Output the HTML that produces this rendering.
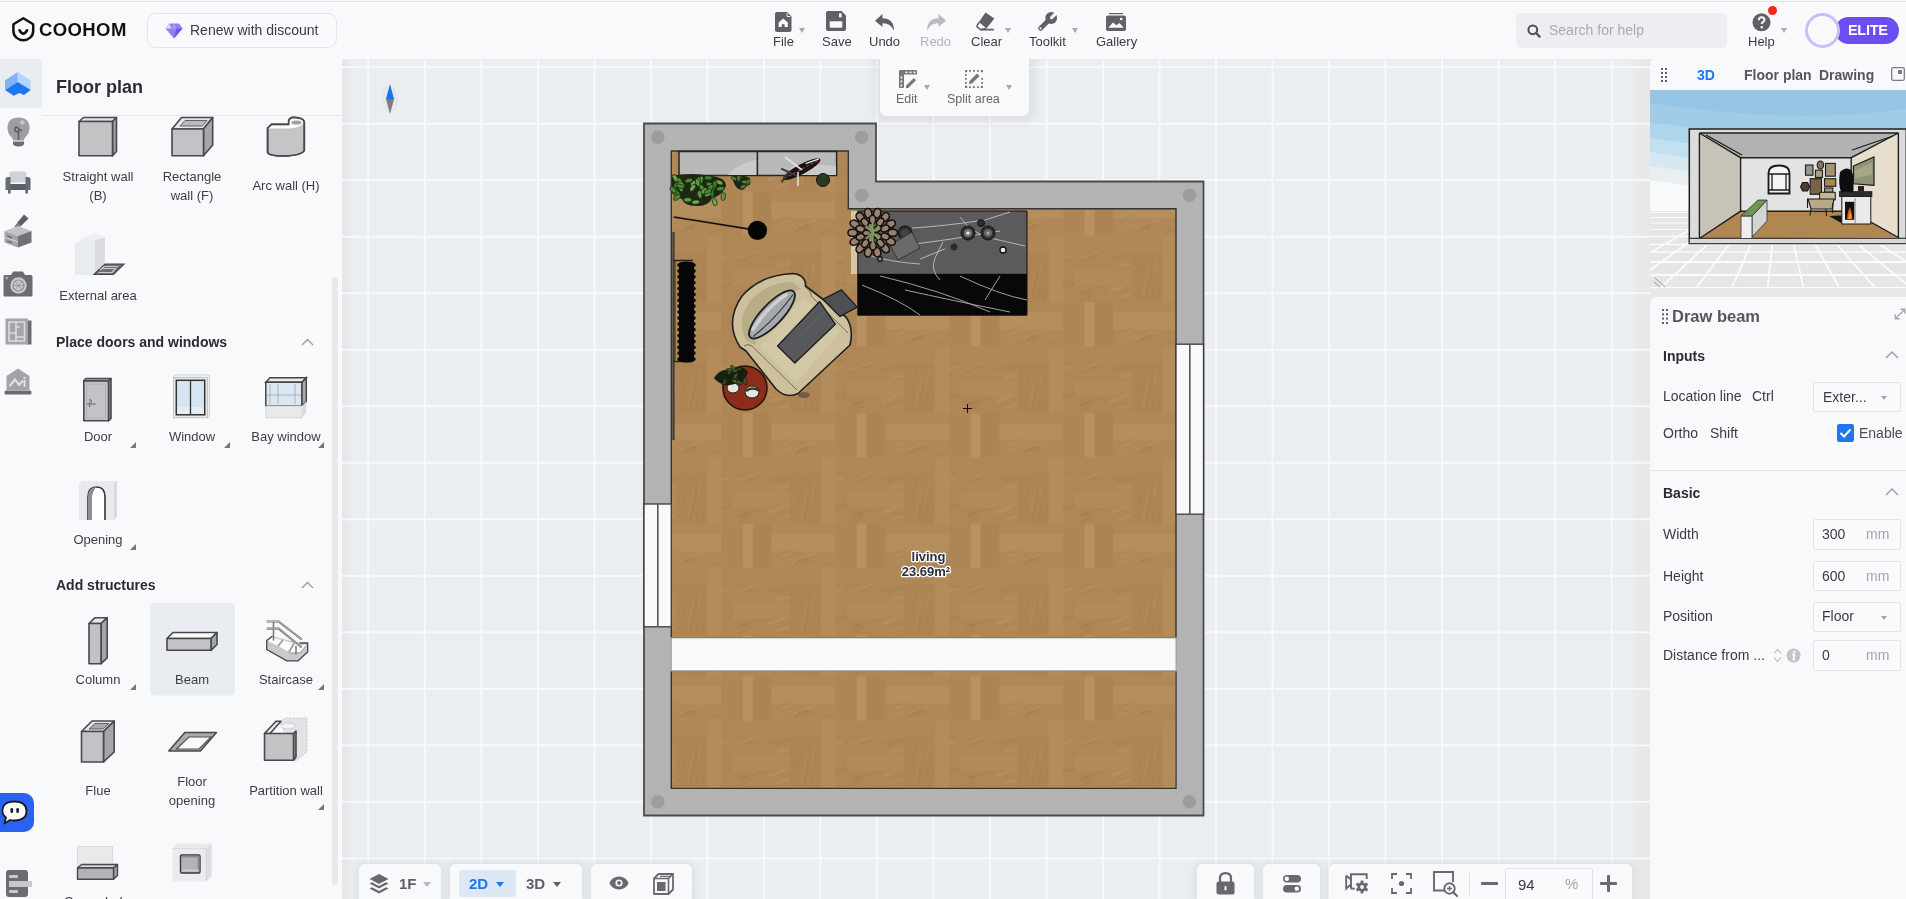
<!DOCTYPE html>
<html><head><meta charset="utf-8">
<style>
*{box-sizing:border-box;margin:0;padding:0}
html,body{width:1906px;height:899px;overflow:hidden;background:#f8f9fa;font-family:"Liberation Sans",sans-serif;color:#33353a;position:relative}
.a{position:absolute}
svg{display:block;overflow:visible}
.tbl{position:absolute;font-size:13px;color:#3a3c40;white-space:nowrap;line-height:15px;margin-top:-1px}
.lbl{position:absolute;font-size:13px;color:#3c3e42;text-align:center;line-height:19px;white-space:nowrap}
.tri{position:absolute;width:0;height:0;border-left:3px solid transparent;border-right:3px solid transparent;border-top:4px solid #a8aaad}
.ctri{position:absolute;width:0;height:0;border-left:6px solid transparent;border-bottom:6px solid #777}
#root{position:absolute;left:0;top:0;width:1906px;height:899px;will-change:transform}
</style></head><body><div id="root">
<!-- TOP BAR -->
<div class="a" style="left:0;top:0;width:1906px;height:59px;background:#f8f9fa"></div>
<div class="a" style="left:0;top:1px;width:1906px;height:1px;background:#e2e3e5"></div>
<!-- logo -->
<svg class="a" style="left:12px;top:17px" width="23" height="25" viewBox="0 0 23 25">
 <path d="M11.3 1.3 L21.2 7.2 V14 C21.2 19.5 16.5 23.2 11.3 23.2 C6.1 23.2 1.4 19.5 1.4 14 V7.2 Z" fill="none" stroke="#111" stroke-width="2.5" stroke-linejoin="round"/>
 <path d="M7.6 13.3 Q11.3 20 15 13.3" fill="none" stroke="#111" stroke-width="2.7" stroke-linecap="round"/>
</svg>
<div class="a" style="left:39px;top:19px;font-size:18.5px;font-weight:700;color:#111;letter-spacing:0.4px;line-height:22px">COOHOM</div>
<!-- renew button -->
<div class="a" style="left:147px;top:13px;width:190px;height:35px;border:1px solid #e3e4e7;border-radius:9px;background:#f9fafb"></div>
<svg class="a" style="left:165px;top:23px" width="18" height="16" viewBox="0 0 18 16">
 <path d="M4 0.5 H14 L17.5 5.5 L9 15.5 L0.5 5.5 Z" fill="#8f7ff5"/>
 <path d="M0.5 5.5 L4 0.5 L6.5 5.5 Z" fill="#dcdff5"/>
 <path d="M9 15.5 L17.5 5.5 H11.5 Z" fill="#6d55f0"/>
 <path d="M6.5 5.5 L9 0.5 L11.5 5.5 Z" fill="#a99cf7"/>
</svg>
<div class="a" style="left:190px;top:22px;font-size:14px;color:#3a3c40;line-height:16px">Renew with discount</div>

<!-- toolbar -->
<!-- File -->
<svg class="a" style="left:775px;top:12px" width="17" height="20" viewBox="0 0 17 20">
 <path d="M2 0 H12 L16.5 4.5 V18 Q16.5 20 14.5 20 H2 Q0 20 0 18 V2 Q0 0 2 0 Z" fill="#5f6166"/>
 <path d="M12 1 V4.5 H15.5" fill="none" stroke="#f8f9fa" stroke-width="0.9"/>
 <path d="M3.6 10.4 L8.2 6.4 L12.8 10.4 V15 H9.6 V12.3 H6.8 V15 H3.6 Z" fill="#f8f9fa"/>
</svg>
<div class="tri" style="left:799px;top:28px;border-left-width:3.5px;border-right-width:3.5px;border-top-width:5px"></div>
<div class="tbl" style="left:773px;top:35px">File</div>
<!-- Save -->
<svg class="a" style="left:826px;top:11px" width="20" height="20" viewBox="0 0 20 20">
 <path d="M2 0 H15.5 L20 4.5 V18 Q20 20 18 20 H2 Q0 20 0 18 V2 Q0 0 2 0 Z" fill="#5f6166"/>
 <rect x="13" y="2.3" width="2.6" height="4" fill="#f8f9fa"/>
 <rect x="3.7" y="10.3" width="12.6" height="6.4" fill="#f8f9fa"/>
</svg>
<div class="tbl" style="left:822px;top:35px">Save</div>
<!-- Undo -->
<svg class="a" style="left:875px;top:14px" width="20" height="17" viewBox="0 0 20 17">
 <path d="M7.5 0 L0 6.7 L7.5 13 V9.2 Q15 8.7 19 16.5 Q18.8 4.5 7.5 4.3 Z" fill="#5f6166"/>
</svg>
<div class="tbl" style="left:869px;top:35px">Undo</div>
<!-- Redo -->
<svg class="a" style="left:926px;top:14px" width="20" height="17" viewBox="0 0 20 17">
 <path d="M12.5 0 L20 6.7 L12.5 13 V9.2 Q5 8.7 1 16.5 Q1.2 4.5 12.5 4.3 Z" fill="#b9bbbe"/>
</svg>
<div class="tbl" style="left:920px;top:35px;color:#b3b5b8">Redo</div>
<!-- Clear -->
<svg class="a" style="left:976px;top:12px" width="19" height="19" viewBox="0 0 19 19">
 <path d="M9.5 0.4 L18.4 6.6 L10.4 16.6 L2.9 10 Z" fill="#5f6166"/>
 <path d="M3.3 10.3 L1.2 13.4 Q0.6 14.4 1.5 15.2 L4.2 17.4 Q4.9 17.9 5.8 17.6 L10 16.4" fill="none" stroke="#5f6166" stroke-width="1.6" stroke-linejoin="round"/>
 <path d="M5 17.6 H17.2" stroke="#5f6166" stroke-width="1.8" stroke-linecap="round"/>
</svg>
<div class="tri" style="left:1005px;top:28px;border-left-width:3.5px;border-right-width:3.5px;border-top-width:5px"></div>
<div class="tbl" style="left:971px;top:35px">Clear</div>
<!-- Toolkit -->
<svg class="a" style="left:1038px;top:12px" width="20" height="19" viewBox="0 0 20 19">
 <path d="M12.5 6.5 L2.4 16.5" stroke="#5f6166" stroke-width="4.6" stroke-linecap="round"/>
 <circle cx="13.2" cy="6" r="5.9" fill="#5f6166"/>
 <path d="M13.6 5.6 L17.6 1.6" stroke="#f8f9fa" stroke-width="3.2" stroke-linecap="round"/>
 <path d="M17.6 1.6 L21 -1.8" stroke="#f8f9fa" stroke-width="3.6"/>
 <circle cx="2.5" cy="16.4" r="1.1" fill="#f8f9fa"/>
</svg>
<div class="tri" style="left:1072px;top:28px;border-left-width:3.5px;border-right-width:3.5px;border-top-width:5px"></div>
<div class="tbl" style="left:1029px;top:35px">Toolkit</div>
<!-- Gallery -->
<svg class="a" style="left:1106px;top:13px" width="20" height="18" viewBox="0 0 20 18">
 <rect x="3" y="0" width="14" height="1.2" fill="#5f6166"/>
 <rect x="0" y="2.4" width="20" height="15.6" rx="1.8" fill="#5f6166"/>
 <path d="M2.2 14.8 L7 9.5 L10.5 12.3 L13.5 10 L17.8 14.8 Z" fill="#f8f9fa"/>
 <circle cx="15.2" cy="6" r="1.3" fill="#f8f9fa"/>
</svg>
<div class="tbl" style="left:1096px;top:35px">Gallery</div>

<!-- search -->
<div class="a" style="left:1516px;top:13px;width:211px;height:35px;border-radius:6px;background:#eceef1"></div>
<svg class="a" style="left:1527px;top:24px" width="14" height="14" viewBox="0 0 14 14">
 <circle cx="5.8" cy="5.8" r="4.4" fill="none" stroke="#4c4e52" stroke-width="2"/>
 <path d="M9 9 L12.6 12.6" stroke="#4c4e52" stroke-width="2.2" stroke-linecap="round"/>
</svg>
<div class="a" style="left:1549px;top:22px;font-size:14px;color:#a9abb0;line-height:16px">Search for help</div>
<!-- help -->
<svg class="a" style="left:1752px;top:13px" width="22" height="20" viewBox="0 0 22 20">
 <circle cx="9.5" cy="9.3" r="9" fill="#5f6166"/>
 <path d="M6.8 7.2 Q6.8 4.2 9.6 4.2 Q12.4 4.2 12.4 6.8 Q12.4 8.4 10.6 9.3 Q9.8 9.8 9.8 11" fill="none" stroke="#f8f9fa" stroke-width="2"/>
 <circle cx="9.8" cy="14.2" r="1.2" fill="#f8f9fa"/>
 
</svg>
<div class="a" style="left:1768px;top:6px;width:9px;height:9px;border-radius:50%;background:#f4271a"></div>
<div class="tri" style="left:1781px;top:28px;border-left-width:3.5px;border-right-width:3.5px;border-top-width:5px"></div>
<div class="tbl" style="left:1748px;top:35px">Help</div>
<!-- elite -->
<div class="a" style="left:1835px;top:17px;width:64px;height:27px;border-radius:14px;background:#6c4df2"></div>
<div class="a" style="left:1804.5px;top:12.5px;width:35px;height:35px;border-radius:50%;border:3px solid #c8befa;background:#f8f9fa"></div>
<div class="a" style="left:1848px;top:21px;font-size:14.5px;font-weight:700;color:#fff;line-height:18px;letter-spacing:-0.3px">ELITE</div>
<!-- LEFT STRIP -->
<div class="a" style="left:0;top:59px;width:42px;height:48.5px;background:#e9ecf0;border-radius:0 3px 3px 0"></div>
<svg class="a" style="left:4px;top:70px" width="28" height="28" viewBox="0 0 28 28">
 <path d="M13.7 2 L1 10.4 V20 L13.7 12 Z" fill="#7fb3f8"/>
 <path d="M13.7 2 L26.7 10.6 V20 L13.7 12 Z" fill="#b5d6fa"/>
 <path d="M1 20 L13.7 12 L26.7 20 L20 25 L15.4 23 L9.7 25.7 Z" fill="#1f76f2"/>
</svg>
<!-- bulb -->
<svg class="a" style="left:7px;top:117px" width="23" height="30" viewBox="0 0 23 30">
 <path d="M11.5 0.5 Q22.5 0.5 22.5 11 Q22.5 16 19 19.5 Q17 21.5 17 23.5 H6 Q6 21.5 4 19.5 Q0.5 16 0.5 11 Q0.5 0.5 11.5 0.5 Z" fill="#9c9ea2"/>
 <path d="M6 24.5 H17 V26.5 Q17 29.5 11.5 29.5 Q6 29.5 6 26.5 Z" fill="#6c6e72"/>
 <circle cx="15.5" cy="5.5" r="2.2" fill="#c8c9cc"/>
 <path d="M11.5 23 V13 M11.5 15 Q7 15 8 11.5 Q9 9 11 11 Q13 14 15 13" fill="none" stroke="#5b5d61" stroke-width="1.6"/>
</svg>
<!-- sofa -->
<svg class="a" style="left:5px;top:171px" width="26" height="23" viewBox="0 0 26 23">
 <rect x="4.5" y="0.5" width="17" height="11" rx="2" fill="#cfd2d6"/>
 <path d="M0.5 8 Q0.5 6 3 6 H5.5 V13 H20.5 V6 H23 Q25.5 6 25.5 8 V19 H0.5 Z" fill="#666a72"/>
 <path d="M5.5 13 H20.5 V19 H5.5 Z" fill="#5a5e66"/>
 <rect x="3" y="19" width="2.6" height="3.5" fill="#5f6268"/><rect x="20.4" y="19" width="2.6" height="3.5" fill="#5f6268"/>
</svg>
<!-- drawer -->
<svg class="a" style="left:4px;top:214px" width="28" height="34" viewBox="0 0 28 34">
 <path d="M20 0.5 L24.5 4.5 L17 12 L13 9 Z" fill="#5e6064"/>
 <path d="M13 9 L17 12 L12 16 L10.5 12.5 Z" fill="#7b7d81"/>
 <path d="M0.5 17 L14 12 L27.5 17 L14 22 Z" fill="#c2c3c6"/>
 <path d="M0.5 17 L14 22 V33.5 L0.5 28.5 Z" fill="#a3a5a8"/>
 <path d="M14 22 L27.5 17 V28.5 L14 33.5 Z" fill="#6f7175"/>
 <path d="M3 22 L8 23.8 M3 27 L8 28.8" stroke="#5a5c60" stroke-width="1.2"/>
 <path d="M0.5 23.2 L14 28" stroke="#dfe0e2" stroke-width="0.8"/>
</svg>
<!-- camera -->
<svg class="a" style="left:3px;top:271px" width="30" height="26" viewBox="0 0 30 26">
 <path d="M10 0.5 H20 L22 4 H28 Q29.5 4 29.5 5.5 V24 Q29.5 25.5 28 25.5 H2 Q0.5 25.5 0.5 24 V5.5 Q0.5 4 2 4 H8 Z" fill="#6a6c70"/>
 <circle cx="15.5" cy="14.5" r="8.2" fill="#c9cacd"/>
 <circle cx="15.5" cy="14.5" r="5.5" fill="none" stroke="#8e9094" stroke-width="1.2"/>
 <path d="M12 10 L19 19 M19 10 L12 19 M10 14.5 H21" stroke="#8e9094" stroke-width="0.9"/>
 <circle cx="3.8" cy="7" r="1.4" fill="#a5a7ab"/>
</svg>
<!-- floorplan -->
<svg class="a" style="left:5px;top:318px" width="27" height="27" viewBox="0 0 27 27">
 <rect x="22" y="2.5" width="4.5" height="24" fill="#6c6e72"/>
 <rect x="0.5" y="0.5" width="22.5" height="26" fill="#a3a5a8"/>
 <path d="M4 4 H19.5 V23 H4 Z M4 15 H11 V9 M11 4 V9 H15 M11 15 V23 M11 19 H19.5" fill="none" stroke="#dcdde0" stroke-width="1.6"/>
</svg>
<!-- ai house -->
<svg class="a" style="left:4px;top:368px" width="28" height="27" viewBox="0 0 28 27">
 <path d="M14 0.5 L25.5 8 V22 H2.5 V8 Z" fill="#a1a3a6"/>
 <rect x="0.5" y="22.5" width="27" height="4" rx="1.5" fill="#6a6c70"/>
 <path d="M6 17.5 L11 11.5 L15 17 L18.5 13" fill="none" stroke="#e2e3e5" stroke-width="2" stroke-linecap="round"/>
 <path d="M20.5 13 V18" stroke="#e2e3e5" stroke-width="2" stroke-linecap="round"/><circle cx="20.5" cy="10" r="1.2" fill="#e2e3e5"/>
</svg>
<!-- chat -->
<div class="a" style="left:-8px;top:793px;width:42px;height:39px;border-radius:0 10px 10px 0;background:#2b62f3"></div>
<svg class="a" style="left:1px;top:800px" width="28" height="26" viewBox="0 0 28 26">
 <path d="M13.5 1.5 Q25.5 1.5 25.5 11 Q25.5 20.5 13.5 20.5 Q11 20.5 9 20 L3.5 23.5 L5 17.5 Q1.5 15 1.5 11 Q1.5 1.5 13.5 1.5 Z" fill="#fff" stroke="#1d1d1f" stroke-width="1.8" stroke-linejoin="round"/>
 <rect x="9.5" y="8" width="2.6" height="5" rx="1.3" fill="#1d1d1f"/><rect x="15.3" y="8" width="2.6" height="5" rx="1.3" fill="#1d1d1f"/>
</svg>
<!-- bottom strip icon -->
<svg class="a" style="left:6px;top:870px" width="26" height="27" viewBox="0 0 26 27">
 <rect x="0" y="0" width="22" height="27" rx="3" fill="#6a6c70"/>
 <rect x="3" y="5" width="9" height="3" rx="1" fill="#c8c9cc"/>
 <rect x="3" y="11" width="23" height="6" fill="#c8c9cc"/>
 <rect x="3" y="20" width="9" height="3" rx="1" fill="#c8c9cc"/>
</svg>

<!-- LEFT PANEL -->
<div class="a" style="left:56px;top:76px;font-size:18px;font-weight:700;color:#2a2c30;line-height:22px">Floor plan</div>
<div class="a" style="left:42px;top:115px;width:300px;height:1px;background:#e7e8ea"></div>
<div class="a" style="left:332px;top:277px;width:6px;height:608px;border-radius:3px;background:#e8e9eb"></div>

<svg class="a" style="left:0;top:0" width="342" height="899" viewBox="0 0 342 899">
 <g stroke="#48494c" stroke-width="1.6" stroke-linejoin="round">
  <!-- straight wall -->
  <path d="M79 121.5 L83.5 117.5 H116.5 L112.5 121.5 Z" fill="#e6e6e8"/>
  <path d="M112.5 121.5 L116.5 117.5 V151.5 L112.5 155.8 Z" fill="#9fa0a3"/>
  <rect x="79" y="121.5" width="33.5" height="34.3" fill="#c3c3c5"/>
  <!-- rectangle wall -->
  <path d="M172 129 L181.5 117.5 H212.7 L203.5 129 Z" fill="#e6e6e8"/>
  <path d="M180 126 L185 120.5 H207 L202.5 126 Z" fill="#b9babc" stroke-width="0.8"/>
  <path d="M203.5 129 L212.7 117.5 V145 L203.5 155.8 Z" fill="#a4a5a8"/>
  <rect x="172" y="129" width="31.5" height="26.8" fill="#c3c3c5"/>
  <!-- arc wall -->
  <path d="M267.6 128 L271.5 124.4 H288.7 V120.5 Q290 117.3 293.5 117.3 Q304.3 117.6 304.3 122.5 V150.5 Q302 155.3 285 156 Q269 156.3 267.6 152.5 Z" fill="#c5c5c7"/>
  <path d="M268.4 128.5 L271.8 125.2 H289.2 V121.5 Q290 118.4 293.5 118.4 Q303.4 118.8 303.5 122.8 Q302.3 127.6 290 128.4 Z" fill="#fbfbfb" stroke="none"/>
  <ellipse cx="296.5" cy="122.6" rx="5" ry="2" fill="#a3a3a5" stroke="none"/>
  <path d="M267.6 128 L271.5 124.4 H288.7 V120.5 Q290 117.3 293.5 117.3 Q304.3 117.6 304.3 122.5 V150.5 Q302 155.3 285 156 Q269 156.3 267.6 152.5 Z" fill="none"/>
 </g>
 <!-- external area -->
 <path d="M75 244 L85 237 L95 240 V275 H75 Z" fill="#e9ecef"/>
 <path d="M95 240 L105 237 V266 L95 275 Z" fill="#dcdde0"/>
 <path d="M85 237 L95 240 L105 237 L95 233 Z" fill="#eeeff1"/>
 <path d="M94 274.5 L105 264 H124 L113.5 274.5 Z" fill="#6e7073" stroke="#444" stroke-width="1.2"/>
 <path d="M100 270 L104 266.5 H118 M98.5 272.5 H112 L115.5 268.5 H102" stroke="#c9cacd" stroke-width="1.2" fill="none"/>

 <!-- door -->
 <g stroke="#48494c" stroke-width="1.6" stroke-linejoin="round">
  <path d="M83.8 380.5 L86 378.6 H111 L108.5 381 Z" fill="#e6e6e8"/>
  <path d="M108.5 381 L111 378.6 V418.5 L108.5 420.8 Z" fill="#9fa0a3"/>
  <rect x="83.8" y="381" width="24.7" height="39.8" fill="#c3c3c5"/>
 </g>
 <rect x="86.5" y="384" width="19" height="34" fill="none" stroke="#b0b1b3" stroke-width="1"/>
 <path d="M87 404 H95.5 M89 400 Q91.5 399 91.5 401.5 Q91.5 403 89 403 M89 405 Q91 406.5 89 407" stroke="#555" stroke-width="0.9" fill="none"/>
 <!-- window -->
 <path d="M173.5 376.5 L175 374.9 H209.4 V416 L207.5 417.8 Z" fill="#eeeff1" stroke="#c9cacc" stroke-width="0.8"/>
 <rect x="173.5" y="377.5" width="34" height="40.3" fill="#e7e8ea" stroke="#b9babc" stroke-width="0.8"/>
 <rect x="176.3" y="380.3" width="28.4" height="34.5" fill="#d5e6f2" stroke="#333" stroke-width="1.5"/>
 <rect x="177.3" y="407" width="26.4" height="7" fill="#e8ecef"/>
 <path d="M190.5 380.3 V414.8" stroke="#333" stroke-width="1.3"/>
 <!-- bay window -->
 <path d="M265.8 382.3 L270 377.8 H306.3 L302 382.3 Z" fill="#e9eaec" stroke="#444" stroke-width="1.5"/>
 <path d="M265.8 382.3 H302 V406 H265.8 Z" fill="#dbe8f3" stroke="#444" stroke-width="1.5"/>
 <path d="M302 382.3 L306.3 377.8 V401.5 L302 406 Z" fill="#a8a9ab" stroke="#444" stroke-width="1.4"/>
 <path d="M270 384 V404 M278 384 V404 M295 384 V404 M267 395 H301" stroke="#9aa6b0" stroke-width="0.8"/>
 <path d="M265.8 406 H302 V417.8 H265.8 Z" fill="#e8e9ea" stroke="#d0d1d3" stroke-width="0.8"/>
 <path d="M302 406 L306.3 401.5 V413 L302 417.8 Z" fill="#dcdde0"/>
 <!-- opening -->
 <path d="M79 484 L82 481 H117 V517 L114 520 H79 Z" fill="#e7e9ec"/>
 <path d="M114 484 L117 481 V517 L114 520 Z" fill="#d9dadd"/>
 <path d="M88 520 V497 Q88 487 96.5 487 Q105 487 105 497 V520" fill="#ffffff" stroke="#333" stroke-width="1.6"/>
 <path d="M88 520 V497 Q88 487 96.5 487 Q93 490 92 497 V520 Z" fill="#8e9094"/>

 <!-- beam selected bg -->
 <rect x="150.2" y="602.8" width="84.7" height="92.8" rx="4" fill="#e9ecf0"/>
 <g stroke="#48494c" stroke-width="1.6" stroke-linejoin="round">
  <!-- column -->
  <path d="M89 623.5 L95 617.7 H107.2 L101 623.5 Z" fill="#e6e6e8"/>
  <path d="M101 623.5 L107.2 617.7 V658 L101 663.7 Z" fill="#a4a5a8"/>
  <rect x="89" y="623.5" width="12" height="40.2" fill="#c3c3c5"/>
  <!-- beam -->
  <path d="M167 638.5 L173 632.5 H217 L211 638.5 Z" fill="#fbfbfc"/>
  <path d="M211 638.5 L217 632.5 V644.5 L211 650.3 Z" fill="#a4a5a8"/>
  <rect x="167" y="638.5" width="44" height="11.8" fill="#c3c3c5"/>
 </g>
 <!-- staircase -->
 <path d="M266.7 640.5 L271.8 636 L300 643 L307.7 643 V651.8 L297.9 660.9 H286.9 L266.7 649.5 Z" fill="#cacacc"/>
 <path d="M268 641 L272 637.5 L282 640 L278 646 Z" fill="#fbfbfb"/>
 <path d="M279 646.5 L283 640.3 L293 643 L289 652 Z" fill="#fbfbfb"/>
 <path d="M290 652.5 L294 643.5 L300 645 L306.5 645 L300 652.5 Z" fill="#fbfbfb"/>
 <path d="M278 646 L283 640 M289 652 L294 643.5" stroke="#9a9b9d" stroke-width="1.6"/>
 <path d="M289 653 H300 L306.5 645.5" fill="none" stroke="#9d9ea0" stroke-width="1"/>
 <path d="M273.5 621.5 V640.5 M296 646 V654.5" stroke="#77787b" stroke-width="1.5"/>
 <g fill="none" stroke-linejoin="miter">
  <path d="M266.7 621.5 H278.5 L301.8 639.5" stroke="#6f7073" stroke-width="2.2"/>
  <path d="M266.7 628.7 H278.5 L301.8 647.5" stroke="#6f7073" stroke-width="2.2"/>
  <path d="M266.7 621.5 H278.5 L301.8 639.5" stroke="#d7d7d9" stroke-width="0.7"/>
  <path d="M266.7 628.7 H278.5 L301.8 647.5" stroke="#d7d7d9" stroke-width="0.7"/>
 </g>
 <path d="M272.5 636 L266.7 640.5 V649.5 L286.9 660.9 H297.9 L307.7 651.8 V643 H299.5" fill="none" stroke="#48494c" stroke-width="1.3" stroke-linejoin="round"/>
 <g stroke="#48494c" stroke-width="1.6" stroke-linejoin="round">
  <!-- flue -->
  <path d="M81.5 731.5 L92 721 H114.2 L103.5 731.5 Z" fill="#e6e6e8"/>
  <path d="M89 729 L95 723.5 H109 L103 729 Z" fill="#a9aaad" stroke-width="0.8"/>
  <path d="M103.5 731.5 L114.2 721 V752 L103.5 762 Z" fill="#a4a5a8"/>
  <rect x="81.5" y="731.5" width="22" height="30.5" fill="#c3c3c5"/>
  <!-- floor opening -->
  <path d="M168.8 751 L184.8 732.5 H216.4 L200.4 751 Z" fill="#a9aaad"/>
 </g>
 <path d="M176.5 749 L189 737 H211 L199 749 Z" fill="#fbfbfc" stroke="#555" stroke-width="1.2"/>
 <!-- partition wall -->
 <path d="M280 722 L285 718 H307 V752 L296 761 Z" fill="#e2e3e5" stroke="#c0c1c3" stroke-width="0.8" stroke-dasharray="2 1.5"/>
 <ellipse cx="288" cy="726" rx="7" ry="3" fill="#f3f3f4" stroke="#c7c8ca" stroke-width="0.8"/>
 <g stroke="#48494c" stroke-width="1.6" stroke-linejoin="round">
  <path d="M264.5 733.5 L276 721.3 H281 L270 733.5 Z" fill="#e6e6e8"/>
  <path d="M293.5 733.5 L296 731 V757 L293.5 760.2 Z" fill="#a4a5a8"/>
  <rect x="264.5" y="733.5" width="29" height="26.7" fill="#c3c3c5"/>
 </g>
 <!-- last row -->
 <rect x="77.5" y="846.7" width="35" height="22" fill="#e8e9ea" stroke="#d0d1d3" stroke-width="0.7"/>
 <g stroke="#48494c" stroke-width="1.4" stroke-linejoin="round">
  <path d="M77.5 868 L81.5 864.5 H117.5 L113.5 868 Z" fill="#d6d6d8"/>
  <path d="M113.5 868 L117.5 864.5 V875.5 L113.5 879.2 Z" fill="#9fa0a3"/>
  <rect x="77.5" y="868" width="36" height="11.2" fill="#b2b3b5"/>
 </g>
 <path d="M172.5 848.5 L177 843.4 H211.5 V876 L206 881.5 H172.5 Z" fill="#e9ebee"/>
 <path d="M206 848.5 L211.5 843.4 V876 L206 881.5 Z" fill="#dcdde0"/>
 <path d="M172.5 848.5 H206 V881.5" fill="none" stroke="#c9cacd" stroke-width="0.8" stroke-dasharray="1.6 1.4"/>
 <rect x="180.5" y="855" width="19.5" height="18" rx="1.2" fill="#b3b4b6" stroke="#3a3a3a" stroke-width="1.4"/>
 <path d="M182 856.5 H198.5 V871.5" fill="none" stroke="#8c8d90" stroke-width="2"/>
 <path d="M182 870.5 H198.5" stroke="#cfd0d2" stroke-width="1.6"/>
</svg>

<!-- labels -->
<div class="lbl" style="left:48px;top:167px;width:100px">Straight wall<br>(B)</div>
<div class="lbl" style="left:142px;top:167px;width:100px">Rectangle<br>wall (F)</div>
<div class="lbl" style="left:236px;top:176px;width:100px">Arc wall (H)</div>
<div class="lbl" style="left:48px;top:286px;width:100px">External area</div>
<div class="a" style="left:56px;top:334px;font-size:14px;font-weight:700;color:#2a2c30;line-height:16px">Place doors and windows</div>
<svg class="a" style="left:301px;top:338px" width="13" height="8" viewBox="0 0 13 8"><path d="M1 7 L6.5 1.5 L12 7" fill="none" stroke="#9a9ca0" stroke-width="1.3"/></svg>
<div class="lbl" style="left:48px;top:427px;width:100px">Door</div>
<div class="lbl" style="left:142px;top:427px;width:100px">Window</div>
<div class="lbl" style="left:236px;top:427px;width:100px">Bay window</div>
<div class="ctri" style="left:130px;top:442px"></div>
<div class="ctri" style="left:224px;top:442px"></div>
<div class="ctri" style="left:318px;top:442px"></div>
<div class="lbl" style="left:48px;top:530px;width:100px">Opening</div>
<div class="ctri" style="left:130px;top:544px"></div>
<div class="a" style="left:56px;top:577px;font-size:14px;font-weight:700;color:#2a2c30;line-height:16px">Add structures</div>
<svg class="a" style="left:301px;top:581px" width="13" height="8" viewBox="0 0 13 8"><path d="M1 7 L6.5 1.5 L12 7" fill="none" stroke="#9a9ca0" stroke-width="1.3"/></svg>
<div class="lbl" style="left:48px;top:670px;width:100px">Column</div>
<div class="lbl" style="left:142px;top:670px;width:100px">Beam</div>
<div class="lbl" style="left:236px;top:670px;width:100px">Staircase</div>
<div class="ctri" style="left:130px;top:684px"></div>
<div class="ctri" style="left:318px;top:684px"></div>
<div class="lbl" style="left:48px;top:781px;width:100px">Flue</div>
<div class="lbl" style="left:142px;top:772px;width:100px">Floor<br>opening</div>
<div class="lbl" style="left:236px;top:781px;width:100px">Partition wall</div>
<div class="ctri" style="left:318px;top:804px"></div>
<div class="lbl" style="left:64px;top:892px;text-align:left">Cascaded</div>
<!-- CANVAS -->
<div class="a" style="left:342px;top:59px;width:1308px;height:840px;overflow:hidden;background-color:#ebeef0;
 background-image:linear-gradient(to right,#f7f8f9 2px,transparent 2px),linear-gradient(to bottom,#f7f8f9 2px,transparent 2px),
 linear-gradient(to right,#e6e7e8 0,#e6e7e8 6px,#e9ebee 6px,#e9ebee 9px,transparent 9px),
 linear-gradient(to right,transparent 1288px,#e7e9ea 1295px,#e7e8e9 1308px);
 background-repeat:repeat,repeat,no-repeat,no-repeat;
 background-size:56.52px 56.52px,56.52px 56.52px,100% 100%,100% 100%;background-position:25.3px 7.2px,25.3px 7.2px,0 0,0 0"></div>
<!-- compass -->
<svg class="a" style="left:380px;top:80px" width="20" height="38" viewBox="0 0 20 38">
 <ellipse cx="10" cy="19" rx="8" ry="14" fill="#e4e6e8" opacity="0.8"/>
 <path d="M10 4 L14 19 H6 Z" fill="#1a73f5"/>
 <path d="M6 19 H14 L10 34 Z" fill="#7a7c80"/>
</svg>
<!-- FLOOR PLAN -->
<svg class="a" style="left:0;top:0" width="1906" height="899" viewBox="0 0 1906 899">
 <defs>
  <pattern id="wood" patternUnits="userSpaceOnUse" x="960.7" y="413.4" width="113.9" height="111">
   <rect width="113.9" height="111" fill="#af8757"/>
   <rect x="0" y="0" width="10" height="44" fill="#ae8656"/>
   <rect x="10" y="0" width="10" height="44" fill="#b89161"/>
   <rect x="20" y="0" width="18.5" height="44" fill="#ac8454"/>
   <rect x="38.5" y="0" width="64" height="44" fill="#b08858"/>
   <rect x="38.5" y="10" width="64" height="17" fill="#b58e5d"/>
   <path d="M62.0 36.3 l20.9 -7.3" stroke="#bd9665" stroke-width="1.2" opacity="0.6"/><path d="M64.9 36.6 l10.6 -3.7" stroke="#a07849" stroke-width="1.2" opacity="0.55"/><path d="M71.3 39.3 l9.3 -3.3" stroke="#a07849" stroke-width="1.0" opacity="0.55"/><path d="M43.2 39.5 l17.7 -6.2" stroke="#bd9665" stroke-width="0.8" opacity="0.6"/><path d="M89.6 41.5 l17.2 -6.0" stroke="#a07849" stroke-width="1.3" opacity="0.55"/><path d="M46.7 29.2 l15.4 -5.4" stroke="#a07849" stroke-width="0.8" opacity="0.55"/><path d="M48.4 32.1 l8.4 -2.9" stroke="#bd9665" stroke-width="1.2" opacity="0.6"/><path d="M61.4 40.0 l15.3 -5.3" stroke="#a07849" stroke-width="1.3" opacity="0.55"/><path d="M64.5 37.6 l14.4 -5.0" stroke="#a07849" stroke-width="1.0" opacity="0.55"/>
   <rect x="102.5" y="0" width="11.4" height="44" fill="#ae8656"/>
   <rect x="0" y="44" width="88" height="16" fill="#b08858"/>
   <path d="M44.9 75.9 l19.8 -5.9" stroke="#bd9665" stroke-width="1.4" opacity="0.6"/><path d="M14.2 65.2 l12.0 -3.6" stroke="#a07849" stroke-width="0.9" opacity="0.55"/><path d="M34.5 67.6 l19.9 -6.0" stroke="#a07849" stroke-width="1.1" opacity="0.55"/><path d="M43.1 73.9 l8.0 -2.4" stroke="#bd9665" stroke-width="1.0" opacity="0.6"/><path d="M41.0 68.6 l21.7 -6.5" stroke="#a07849" stroke-width="1.1" opacity="0.55"/><path d="M3.3 70.8 l18.9 -5.7" stroke="#a07849" stroke-width="1.0" opacity="0.55"/><path d="M3.9 66.7 l21.5 -6.4" stroke="#bd9665" stroke-width="1.4" opacity="0.6"/><path d="M5.3 65.4 l9.4 -2.8" stroke="#a07849" stroke-width="0.8" opacity="0.55"/>
   <rect x="0" y="78" width="57" height="16" fill="#b28a5a"/>
   <path d="M35.9 98.3 l15.8 -4.7" stroke="#bd9665" stroke-width="1.2" opacity="0.6"/><path d="M8.6 105.5 l9.8 -3.0" stroke="#a07849" stroke-width="1.3" opacity="0.55"/><path d="M5.2 101.5 l11.0 -3.3" stroke="#a07849" stroke-width="1.0" opacity="0.55"/><path d="M43.7 106.4 l12.3 -3.7" stroke="#bd9665" stroke-width="1.5" opacity="0.6"/><path d="M9.5 101.1 l20.0 -6.0" stroke="#a07849" stroke-width="1.3" opacity="0.55"/><path d="M4.5 108.9 l11.0 -3.3" stroke="#a07849" stroke-width="1.0" opacity="0.55"/><path d="M34.8 100.3 l12.1 -3.6" stroke="#bd9665" stroke-width="0.9" opacity="0.6"/><path d="M4.1 103.6 l11.4 -3.4" stroke="#a07849" stroke-width="1.3" opacity="0.55"/>
   <rect x="57" y="60" width="31" height="51" fill="#ad8555"/>
   <path d="M68.5 104.1 l6.0 -27.3" stroke="#bd9665" stroke-width="1" opacity="0.5"/><path d="M71.1 107.1 l5.7 -25.9" stroke="#a07849" stroke-width="1" opacity="0.5"/><path d="M64.2 92.2 l5.8 -26.5" stroke="#a07849" stroke-width="1" opacity="0.5"/><path d="M78.8 84.3 l3.3 -15.0" stroke="#bd9665" stroke-width="1" opacity="0.5"/><path d="M77.0 109.9 l3.3 -15.1" stroke="#a07849" stroke-width="1" opacity="0.5"/><path d="M81.9 114.3 l4.8 -21.7" stroke="#a07849" stroke-width="1" opacity="0.5"/>
   <rect x="88" y="44" width="14.5" height="67" fill="#b48c5c"/>
   <path d="M102.2 66.9 l8.5 -2.6" stroke="#bd9665" stroke-width="1.6" opacity="0.6"/><path d="M102.4 95.1 l11.6 -3.5" stroke="#a07849" stroke-width="1.5" opacity="0.55"/>
   <path d="M0 44 H113.9 M38.5 0 V44 M88 44 V111 M57 60 V111" stroke="#a98051" stroke-width="0.7" opacity="0.35"/>
  </pattern>
  <pattern id="wood2" patternUnits="userSpaceOnUse" x="960.7" y="676.7" width="113.9" height="111">
   <rect width="113.9" height="111" fill="#af8757"/>
   <rect x="0" y="0" width="10" height="44" fill="#ae8656"/>
   <rect x="10" y="0" width="10" height="44" fill="#b89161"/>
   <rect x="20" y="0" width="18.5" height="44" fill="#ac8454"/>
   <rect x="38.5" y="0" width="64" height="44" fill="#b08858"/>
   <rect x="38.5" y="10" width="64" height="17" fill="#b58e5d"/>
   <path d="M62.0 36.3 l20.9 -7.3" stroke="#bd9665" stroke-width="1.2" opacity="0.6"/><path d="M64.9 36.6 l10.6 -3.7" stroke="#a07849" stroke-width="1.2" opacity="0.55"/><path d="M71.3 39.3 l9.3 -3.3" stroke="#a07849" stroke-width="1.0" opacity="0.55"/><path d="M43.2 39.5 l17.7 -6.2" stroke="#bd9665" stroke-width="0.8" opacity="0.6"/><path d="M89.6 41.5 l17.2 -6.0" stroke="#a07849" stroke-width="1.3" opacity="0.55"/><path d="M46.7 29.2 l15.4 -5.4" stroke="#a07849" stroke-width="0.8" opacity="0.55"/><path d="M48.4 32.1 l8.4 -2.9" stroke="#bd9665" stroke-width="1.2" opacity="0.6"/><path d="M61.4 40.0 l15.3 -5.3" stroke="#a07849" stroke-width="1.3" opacity="0.55"/><path d="M64.5 37.6 l14.4 -5.0" stroke="#a07849" stroke-width="1.0" opacity="0.55"/>
   <rect x="102.5" y="0" width="11.4" height="44" fill="#ae8656"/>
   <rect x="0" y="44" width="88" height="16" fill="#b08858"/>
   <path d="M44.9 75.9 l19.8 -5.9" stroke="#bd9665" stroke-width="1.4" opacity="0.6"/><path d="M14.2 65.2 l12.0 -3.6" stroke="#a07849" stroke-width="0.9" opacity="0.55"/><path d="M34.5 67.6 l19.9 -6.0" stroke="#a07849" stroke-width="1.1" opacity="0.55"/><path d="M43.1 73.9 l8.0 -2.4" stroke="#bd9665" stroke-width="1.0" opacity="0.6"/><path d="M41.0 68.6 l21.7 -6.5" stroke="#a07849" stroke-width="1.1" opacity="0.55"/><path d="M3.3 70.8 l18.9 -5.7" stroke="#a07849" stroke-width="1.0" opacity="0.55"/><path d="M3.9 66.7 l21.5 -6.4" stroke="#bd9665" stroke-width="1.4" opacity="0.6"/><path d="M5.3 65.4 l9.4 -2.8" stroke="#a07849" stroke-width="0.8" opacity="0.55"/>
   <rect x="0" y="78" width="57" height="16" fill="#b28a5a"/>
   <path d="M35.9 98.3 l15.8 -4.7" stroke="#bd9665" stroke-width="1.2" opacity="0.6"/><path d="M8.6 105.5 l9.8 -3.0" stroke="#a07849" stroke-width="1.3" opacity="0.55"/><path d="M5.2 101.5 l11.0 -3.3" stroke="#a07849" stroke-width="1.0" opacity="0.55"/><path d="M43.7 106.4 l12.3 -3.7" stroke="#bd9665" stroke-width="1.5" opacity="0.6"/><path d="M9.5 101.1 l20.0 -6.0" stroke="#a07849" stroke-width="1.3" opacity="0.55"/><path d="M4.5 108.9 l11.0 -3.3" stroke="#a07849" stroke-width="1.0" opacity="0.55"/><path d="M34.8 100.3 l12.1 -3.6" stroke="#bd9665" stroke-width="0.9" opacity="0.6"/><path d="M4.1 103.6 l11.4 -3.4" stroke="#a07849" stroke-width="1.3" opacity="0.55"/>
   <rect x="57" y="60" width="31" height="51" fill="#ad8555"/>
   <path d="M68.5 104.1 l6.0 -27.3" stroke="#bd9665" stroke-width="1" opacity="0.5"/><path d="M71.1 107.1 l5.7 -25.9" stroke="#a07849" stroke-width="1" opacity="0.5"/><path d="M64.2 92.2 l5.8 -26.5" stroke="#a07849" stroke-width="1" opacity="0.5"/><path d="M78.8 84.3 l3.3 -15.0" stroke="#bd9665" stroke-width="1" opacity="0.5"/><path d="M77.0 109.9 l3.3 -15.1" stroke="#a07849" stroke-width="1" opacity="0.5"/><path d="M81.9 114.3 l4.8 -21.7" stroke="#a07849" stroke-width="1" opacity="0.5"/>
   <rect x="88" y="44" width="14.5" height="67" fill="#b48c5c"/>
   <path d="M102.2 66.9 l8.5 -2.6" stroke="#bd9665" stroke-width="1.6" opacity="0.6"/><path d="M102.4 95.1 l11.6 -3.5" stroke="#a07849" stroke-width="1.5" opacity="0.55"/>
   <path d="M0 44 H113.9 M38.5 0 V44 M88 44 V111 M57 60 V111" stroke="#a98051" stroke-width="0.7" opacity="0.35"/>
  </pattern>
 </defs>
 <!-- walls -->
 <path d="M644 123.5 H876 V181.5 H1203.5 V815.5 H644 Z" fill="#b3b3b3" stroke="#4a4b4d" stroke-width="1.8"/>
 <!-- floor -->
 <path d="M671.3 151 H848.3 V208.8 H1176 V788.3 H671.3 Z" fill="url(#wood)" stroke="#333436" stroke-width="1.4"/>
 <rect x="672" y="671" width="503.3" height="116.6" fill="url(#wood2)"/>
 <!-- column dots -->
 <g fill="#9d9d9d">
  <circle cx="657.8" cy="137.2" r="6.8"/><circle cx="861.7" cy="137.2" r="6.8"/><circle cx="861.7" cy="195.2" r="6.8"/>
  <circle cx="1189.4" cy="195.3" r="6.8"/><circle cx="1189.4" cy="801.7" r="6.8"/><circle cx="657.8" cy="801.7" r="6.8"/>
 </g>
 <!-- windows -->
 <g fill="#f9f9f9" stroke="#3a3b3d" stroke-width="1.3">
  <rect x="1176" y="344.2" width="27.5" height="170"/>
  <rect x="644" y="504" width="27.3" height="122.8"/>
 </g>
 <path d="M1189.8 344.2 V514.2 M657.8 504 V626.8" stroke="#555658" stroke-width="1.6"/>
 <!-- beam -->
 <rect x="670.5" y="637.3" width="506.2" height="34" fill="#f9f9f9"/>
 <path d="M670.5 637.8 H1176.7 M670.5 671 H1176.7" stroke="#66686c" stroke-width="1.1"/>
 <path d="M671.2 638 V670.5 M1176.1 638 V670.5" stroke="#8d8f92" stroke-width="1"/>
</svg>
<!-- FURNITURE -->
<svg class="a" style="left:0;top:0" width="1906" height="899" viewBox="0 0 1906 899">
 <!-- thin curtain line on left wall -->
 <path d="M673.5 232 V440" stroke="#3c3d40" stroke-width="2.2"/>
 <!-- console -->
 <rect x="679" y="151.5" width="157.6" height="24" fill="#b9b9ba" stroke="#262626" stroke-width="1.5"/>
 <path d="M757.4 151.5 V175.5" stroke="#262626" stroke-width="1.5"/>
 <path d="M728 175 Q735 165 756 160 V175 Z M790 168 Q800 162 836 166 V175 H790 Z" fill="#cacacb"/>
 <!-- plants -->
 <path d="M672 176 Q690 172 712 176 Q726 178 726 186 Q722 196 712 198 Q708 207 696 206 Q684 206 682 199 Q672 196 672 186 Z" fill="#1c2814"/>
 <ellipse cx="688.8" cy="180.5" rx="4" ry="2.2" transform="rotate(166 688.8 180.5)" fill="#4b8a35" stroke="#16200f" stroke-width="0.7"/>
 <ellipse cx="675.8" cy="192.1" rx="4" ry="2.2" transform="rotate(93 675.8 192.1)" fill="#4b8a35" stroke="#16200f" stroke-width="0.7"/>
 <ellipse cx="719.3" cy="182.4" rx="4" ry="2.2" transform="rotate(22 719.3 182.4)" fill="#6aa84a" stroke="#16200f" stroke-width="0.7"/>
 <ellipse cx="693.7" cy="183.2" rx="4" ry="2.2" transform="rotate(141 693.7 183.2)" fill="#6aa84a" stroke="#16200f" stroke-width="0.7"/>
 <ellipse cx="675.1" cy="193.0" rx="4" ry="2.2" transform="rotate(57 675.1 193.0)" fill="#4b8a35" stroke="#16200f" stroke-width="0.7"/>
 <ellipse cx="702.0" cy="187.9" rx="4" ry="2.2" transform="rotate(56 702.0 187.9)" fill="#4b8a35" stroke="#16200f" stroke-width="0.7"/>
 <ellipse cx="700.9" cy="180.0" rx="4" ry="2.2" transform="rotate(107 700.9 180.0)" fill="#5c9d3f" stroke="#16200f" stroke-width="0.7"/>
 <ellipse cx="700.1" cy="193.1" rx="4" ry="2.2" transform="rotate(143 700.1 193.1)" fill="#5c9d3f" stroke="#16200f" stroke-width="0.7"/>
 <ellipse cx="677.4" cy="193.1" rx="4" ry="2.2" transform="rotate(48 677.4 193.1)" fill="#3f7a2c" stroke="#16200f" stroke-width="0.7"/>
 <ellipse cx="677.1" cy="197.4" rx="4" ry="2.2" transform="rotate(144 677.1 197.4)" fill="#4b8a35" stroke="#16200f" stroke-width="0.7"/>
 <ellipse cx="704.2" cy="190.9" rx="4" ry="2.2" transform="rotate(136 704.2 190.9)" fill="#6aa84a" stroke="#16200f" stroke-width="0.7"/>
 <ellipse cx="712.4" cy="190.0" rx="4" ry="2.2" transform="rotate(116 712.4 190.0)" fill="#3f7a2c" stroke="#16200f" stroke-width="0.7"/>
 <ellipse cx="687.6" cy="199.8" rx="4" ry="2.2" transform="rotate(178 687.6 199.8)" fill="#5c9d3f" stroke="#16200f" stroke-width="0.7"/>
 <ellipse cx="676.3" cy="185.0" rx="4" ry="2.2" transform="rotate(126 676.3 185.0)" fill="#3f7a2c" stroke="#16200f" stroke-width="0.7"/>
 <ellipse cx="709.9" cy="184.6" rx="4" ry="2.2" transform="rotate(18 709.9 184.6)" fill="#4b8a35" stroke="#16200f" stroke-width="0.7"/>
 <ellipse cx="698.6" cy="180.9" rx="4" ry="2.2" transform="rotate(87 698.6 180.9)" fill="#5c9d3f" stroke="#16200f" stroke-width="0.7"/>
 <ellipse cx="720.5" cy="188.7" rx="4" ry="2.2" transform="rotate(171 720.5 188.7)" fill="#4b8a35" stroke="#16200f" stroke-width="0.7"/>
 <ellipse cx="711.8" cy="193.2" rx="4" ry="2.2" transform="rotate(80 711.8 193.2)" fill="#3f7a2c" stroke="#16200f" stroke-width="0.7"/>
 <ellipse cx="708.2" cy="193.8" rx="4" ry="2.2" transform="rotate(148 708.2 193.8)" fill="#6aa84a" stroke="#16200f" stroke-width="0.7"/>
 <ellipse cx="675.6" cy="178.8" rx="4" ry="2.2" transform="rotate(69 675.6 178.8)" fill="#6aa84a" stroke="#16200f" stroke-width="0.7"/>
 <ellipse cx="708.2" cy="177.9" rx="4" ry="2.2" transform="rotate(179 708.2 177.9)" fill="#3f7a2c" stroke="#16200f" stroke-width="0.7"/>
 <ellipse cx="714.7" cy="184.5" rx="4" ry="2.2" transform="rotate(98 714.7 184.5)" fill="#3f7a2c" stroke="#16200f" stroke-width="0.7"/>
 <ellipse cx="673.2" cy="189.9" rx="4" ry="2.2" transform="rotate(43 673.2 189.9)" fill="#4b8a35" stroke="#16200f" stroke-width="0.7"/>
 <ellipse cx="697.7" cy="182.5" rx="4" ry="2.2" transform="rotate(73 697.7 182.5)" fill="#5c9d3f" stroke="#16200f" stroke-width="0.7"/>
 <ellipse cx="710.4" cy="187.9" rx="4" ry="2.2" transform="rotate(127 710.4 187.9)" fill="#4b8a35" stroke="#16200f" stroke-width="0.7"/>
 <ellipse cx="680.7" cy="188.0" rx="4" ry="2.2" transform="rotate(71 680.7 188.0)" fill="#5c9d3f" stroke="#16200f" stroke-width="0.7"/>
 <ellipse cx="714.6" cy="201.9" rx="4" ry="2.2" transform="rotate(71 714.6 201.9)" fill="#6aa84a" stroke="#16200f" stroke-width="0.7"/>
 <ellipse cx="723.3" cy="196.5" rx="4" ry="2.2" transform="rotate(97 723.3 196.5)" fill="#5c9d3f" stroke="#16200f" stroke-width="0.7"/>
 <ellipse cx="679.8" cy="181.3" rx="4" ry="2.2" transform="rotate(59 679.8 181.3)" fill="#5c9d3f" stroke="#16200f" stroke-width="0.7"/>
 <ellipse cx="681.5" cy="184.5" rx="4" ry="2.2" transform="rotate(37 681.5 184.5)" fill="#6aa84a" stroke="#16200f" stroke-width="0.7"/>
 <ellipse cx="699.8" cy="194.3" rx="4" ry="2.2" transform="rotate(81 699.8 194.3)" fill="#5c9d3f" stroke="#16200f" stroke-width="0.7"/>
 <ellipse cx="707.9" cy="191.5" rx="4" ry="2.2" transform="rotate(158 707.9 191.5)" fill="#4b8a35" stroke="#16200f" stroke-width="0.7"/>
 <ellipse cx="695.7" cy="202.1" rx="4" ry="2.2" transform="rotate(174 695.7 202.1)" fill="#6aa84a" stroke="#16200f" stroke-width="0.7"/>
 <ellipse cx="692.7" cy="187.8" rx="4" ry="2.2" transform="rotate(123 692.7 187.8)" fill="#6aa84a" stroke="#16200f" stroke-width="0.7"/>
 <ellipse cx="675.2" cy="178.0" rx="4" ry="2.2" transform="rotate(53 675.2 178.0)" fill="#6aa84a" stroke="#16200f" stroke-width="0.7"/>
 <ellipse cx="680.4" cy="186.2" rx="4" ry="2.2" transform="rotate(13 680.4 186.2)" fill="#4b8a35" stroke="#16200f" stroke-width="0.7"/>
 <path d="M732 177 Q741 173 750 178 Q749 186 742 190 Q735 190 732 177 Z" fill="#1c2814"/>
 <ellipse cx="734.0" cy="178.5" rx="3" ry="1.6" transform="rotate(25 734.0 178.5)" fill="#4f8a38" stroke="#16200f" stroke-width="0.6"/>
 <ellipse cx="747.3" cy="183.1" rx="3" ry="1.6" transform="rotate(18 747.3 183.1)" fill="#4f8a38" stroke="#16200f" stroke-width="0.6"/>
 <ellipse cx="746.2" cy="183.1" rx="3" ry="1.6" transform="rotate(38 746.2 183.1)" fill="#4f8a38" stroke="#16200f" stroke-width="0.6"/>
 <ellipse cx="742.9" cy="186.6" rx="3" ry="1.6" transform="rotate(154 742.9 186.6)" fill="#4f8a38" stroke="#16200f" stroke-width="0.6"/>
 <ellipse cx="739.1" cy="178.2" rx="3" ry="1.6" transform="rotate(124 739.1 178.2)" fill="#4f8a38" stroke="#16200f" stroke-width="0.6"/>
 <ellipse cx="747.9" cy="181.7" rx="3" ry="1.6" transform="rotate(123 747.9 181.7)" fill="#4f8a38" stroke="#16200f" stroke-width="0.6"/>
 <ellipse cx="738.4" cy="178.4" rx="3" ry="1.6" transform="rotate(87 738.4 178.4)" fill="#4f8a38" stroke="#16200f" stroke-width="0.6"/>
 <ellipse cx="744.4" cy="181.8" rx="3" ry="1.6" transform="rotate(177 744.4 181.8)" fill="#4f8a38" stroke="#16200f" stroke-width="0.6"/>
 <circle cx="823" cy="180" r="6.5" fill="#2b3a22" stroke="#111" stroke-width="1"/>
 <!-- helicopter -->
 <g transform="translate(800 170) rotate(-28)">
  <ellipse cx="2" cy="0" rx="21" ry="5" fill="#151515"/>
  <path d="M-18 0 H22" stroke="#b8322a" stroke-width="1.2" stroke-dasharray="3 2"/>
  <path d="M8 -3 L22 -1" stroke="#e8e8e8" stroke-width="1.3"/>
  <path d="M-16 -10 L-4 6 M-22 2 L-10 -4" stroke="#3a3a3a" stroke-width="2"/>
 </g>
 <path d="M785 157 L802 170 M798 172 V186" stroke="#e0e0e0" stroke-width="1.6"/>
 <!-- lamp -->
 <path d="M673.7 217 L757.4 230.4" stroke="#111" stroke-width="1.6"/>
 <circle cx="757.4" cy="230.4" r="9.6" fill="#050505"/>
 <!-- radiator -->
 <path d="M673 260.5 H693 M673 361.5 H693" stroke="#222" stroke-width="1.5"/>
 <path d="M675 260.5 V361.5" stroke="#3a3a3a" stroke-width="1.2"/>
 <g fill="#060606">
 <ellipse cx="686.5" cy="265.0" rx="9.3" ry="3.6"/>
 <ellipse cx="686.5" cy="270.9" rx="9.3" ry="3.6"/>
 <ellipse cx="686.5" cy="276.8" rx="9.3" ry="3.6"/>
 <ellipse cx="686.5" cy="282.6" rx="9.3" ry="3.6"/>
 <ellipse cx="686.5" cy="288.5" rx="9.3" ry="3.6"/>
 <ellipse cx="686.5" cy="294.4" rx="9.3" ry="3.6"/>
 <ellipse cx="686.5" cy="300.2" rx="9.3" ry="3.6"/>
 <ellipse cx="686.5" cy="306.1" rx="9.3" ry="3.6"/>
 <ellipse cx="686.5" cy="312.0" rx="9.3" ry="3.6"/>
 <ellipse cx="686.5" cy="317.9" rx="9.3" ry="3.6"/>
 <ellipse cx="686.5" cy="323.8" rx="9.3" ry="3.6"/>
 <ellipse cx="686.5" cy="329.6" rx="9.3" ry="3.6"/>
 <ellipse cx="686.5" cy="335.5" rx="9.3" ry="3.6"/>
 <ellipse cx="686.5" cy="341.4" rx="9.3" ry="3.6"/>
 <ellipse cx="686.5" cy="347.2" rx="9.3" ry="3.6"/>
 <ellipse cx="686.5" cy="353.1" rx="9.3" ry="3.6"/>
 <ellipse cx="686.5" cy="359.0" rx="9.3" ry="3.6"/>
 <rect x="679" y="264" width="15" height="96"/></g>
 <!-- armchair -->
 <path d="M740 347 Q724 322 742 296 Q760 275 793 273.5 Q806 275 805.5 286 L846 317 Q854 328 850 345 L798 393.5 Q786 399 776 389 L746 351 Z" fill="#cdc19d" stroke="#1e1e1e" stroke-width="1.6" stroke-linejoin="round"/>
 <path d="M747 341 Q735 322 750 301 Q766 283 792 281.5 L801 289 Q780 295 765 312 Q752 328 756 345 Z" fill="#b9ad88"/>
 <path d="M744 346 Q748 343 752 346 L797 390 M805 287 Q812 292 811 296 L848 333" fill="none" stroke="#6d6650" stroke-width="0.9"/>
 <path d="M760 347 L803 297 L841 331 L796 383 Z" fill="#d3c8a6"/>
 <g transform="rotate(-46.6 772 314.5)">
  <ellipse cx="772" cy="314.5" rx="31.5" ry="10.5" fill="#a5a9ad" stroke="#1e1e1e" stroke-width="1.9"/>
  <path d="M748 311 Q772 306 796 311" stroke="#cdd0d3" stroke-width="3.5" fill="none" stroke-linecap="round"/>
  <path d="M743 316 Q772 320 801 316" stroke="#2a2a2a" stroke-width="1" fill="none"/>
 </g>
 <path d="M777.6 346 L794.8 363.1 L835.3 324.2 L819.7 301.6 Z" fill="#56585c" stroke="#1e1e1e" stroke-width="1.4" stroke-linejoin="round"/>
 <path d="M822.8 299.3 L841.5 289.9 L857.1 307.1 L840 316.4 Z" fill="#4e5054" stroke="#1e1e1e" stroke-width="1.4" stroke-linejoin="round"/>
 <path d="M790 344 L825 312 M784 338 L818 308" stroke="#6a6c70" stroke-width="0.8" opacity="0.6"/>
 <ellipse cx="804" cy="395" rx="6" ry="3" fill="#333" opacity="0.5"/>
 <!-- side table -->
 <circle cx="745" cy="388" r="22" fill="#8c2c1b" stroke="#2a0f08" stroke-width="1.5"/>
 <ellipse cx="733" cy="388" rx="6" ry="5" fill="#e5e5e5" stroke="#222" stroke-width="1"/>
 <ellipse cx="752" cy="392" rx="7" ry="6" fill="#e5e5e5" stroke="#222" stroke-width="1"/>
 <path d="M714 378 Q722 366 732 372 Q740 362 748 372 Q745 383 735 384 Q722 388 714 378 Z" fill="#17200f"/><ellipse cx="734.7" cy="379.1" rx="3.4" ry="1.6" transform="rotate(176 734.7 379.1)" fill="#2e4520" stroke="#0e140a" stroke-width="0.6"/><ellipse cx="735.6" cy="376.0" rx="3.4" ry="1.6" transform="rotate(119 735.6 376.0)" fill="#3d5a2a" stroke="#0e140a" stroke-width="0.6"/><ellipse cx="735.5" cy="381.5" rx="3.4" ry="1.6" transform="rotate(28 735.5 381.5)" fill="#4c6e34" stroke="#0e140a" stroke-width="0.6"/><ellipse cx="730.1" cy="371.7" rx="3.4" ry="1.6" transform="rotate(139 730.1 371.7)" fill="#3d5a2a" stroke="#0e140a" stroke-width="0.6"/><ellipse cx="733.2" cy="368.2" rx="3.4" ry="1.6" transform="rotate(55 733.2 368.2)" fill="#4c6e34" stroke="#0e140a" stroke-width="0.6"/><ellipse cx="724.4" cy="381.7" rx="3.4" ry="1.6" transform="rotate(99 724.4 381.7)" fill="#3d5a2a" stroke="#0e140a" stroke-width="0.6"/><ellipse cx="738.9" cy="369.1" rx="3.4" ry="1.6" transform="rotate(158 738.9 369.1)" fill="#2e4520" stroke="#0e140a" stroke-width="0.6"/><ellipse cx="729.3" cy="370.0" rx="3.4" ry="1.6" transform="rotate(1 729.3 370.0)" fill="#3d5a2a" stroke="#0e140a" stroke-width="0.6"/><ellipse cx="739.2" cy="382.4" rx="3.4" ry="1.6" transform="rotate(42 739.2 382.4)" fill="#3d5a2a" stroke="#0e140a" stroke-width="0.6"/><ellipse cx="724.7" cy="382.4" rx="3.4" ry="1.6" transform="rotate(138 724.7 382.4)" fill="#2e4520" stroke="#0e140a" stroke-width="0.6"/><ellipse cx="734.8" cy="370.7" rx="3.4" ry="1.6" transform="rotate(176 734.8 370.7)" fill="#3d5a2a" stroke="#0e140a" stroke-width="0.6"/><ellipse cx="745.0" cy="381.4" rx="3.4" ry="1.6" transform="rotate(76 745.0 381.4)" fill="#3d5a2a" stroke="#0e140a" stroke-width="0.6"/>
 <path d="M746 391 Q752 386 760 391" stroke="#2c3a22" stroke-width="2.5" fill="none"/>
 <!-- marble rug -->
 <rect x="851" y="211" width="7" height="63" fill="#d9c7a3"/>
 <rect x="857.8" y="211" width="169.2" height="62.7" fill="#5b5b5c"/>
 <rect x="857.8" y="273.7" width="169.2" height="41.5" fill="#080808"/>
 <path d="M857.8 211 H1027 V315.2 H857.8 Z" fill="none" stroke="#111" stroke-width="1"/>
 <g stroke="#d9d9d9" stroke-width="0.9" fill="none" opacity="0.8">
  <path d="M912 228 Q945 226 985 220 L1010 212 M900 246 Q950 240 1000 231 M920 259 L945 249 M960 217 Q970 232 990 238 L1025 246 M868 255 Q890 262 920 264 M943 242 L935 258 Q930 270 940 280"/>
  <path d="M862 285 Q900 300 920 315 M880 276 Q940 290 990 312 M960 276 Q1000 295 1027 300 M1000 276 L985 300 M905 290 Q950 300 1010 312"/>
 </g>
 <g fill="#2e2e2e" stroke="#111" stroke-width="1">
  <circle cx="905" cy="233" r="7"/><circle cx="968" cy="233" r="7"/><circle cx="988" cy="233" r="7"/><circle cx="981" cy="223" r="3.5"/>
 </g>
 <circle cx="968" cy="233" r="4" fill="#777"/><circle cx="968" cy="233" r="1.6" fill="#eee"/><circle cx="988" cy="233" r="4" fill="#666"/><circle cx="988" cy="233" r="1.6" fill="#aaa"/><circle cx="905" cy="233" r="4" fill="#444"/>
 <circle cx="1003" cy="250" r="3" fill="#eee" stroke="#111" stroke-width="1.3"/>
 <circle cx="954" cy="247" r="3.5" fill="#2a2a2a"/>
 <!-- plant basket -->
 <path d="M890 245 L912 232 L920 248 L898 260 Z" fill="#6a6a6a" stroke="#333" stroke-width="1"/>
 <circle cx="872.7" cy="232.7" r="16" fill="#59664a"/>
 <g fill="#9c7f6c" stroke="#121212" stroke-width="1.6">
 <ellipse cx="892.7" cy="232.7" rx="4.8" ry="3.6" transform="rotate(0 892.7 232.7)"/>
 <ellipse cx="890.7" cy="241.4" rx="4.8" ry="3.6" transform="rotate(26 890.7 241.4)"/>
 <ellipse cx="885.2" cy="248.3" rx="4.8" ry="3.6" transform="rotate(51 885.2 248.3)"/>
 <ellipse cx="877.2" cy="252.2" rx="4.8" ry="3.6" transform="rotate(77 877.2 252.2)"/>
 <ellipse cx="868.2" cy="252.2" rx="4.8" ry="3.6" transform="rotate(103 868.2 252.2)"/>
 <ellipse cx="860.2" cy="248.3" rx="4.8" ry="3.6" transform="rotate(129 860.2 248.3)"/>
 <ellipse cx="854.7" cy="241.4" rx="4.8" ry="3.6" transform="rotate(154 854.7 241.4)"/>
 <ellipse cx="852.7" cy="232.7" rx="4.8" ry="3.6" transform="rotate(180 852.7 232.7)"/>
 <ellipse cx="854.7" cy="224.0" rx="4.8" ry="3.6" transform="rotate(206 854.7 224.0)"/>
 <ellipse cx="860.2" cy="217.1" rx="4.8" ry="3.6" transform="rotate(231 860.2 217.1)"/>
 <ellipse cx="868.2" cy="213.2" rx="4.8" ry="3.6" transform="rotate(257 868.2 213.2)"/>
 <ellipse cx="877.2" cy="213.2" rx="4.8" ry="3.6" transform="rotate(283 877.2 213.2)"/>
 <ellipse cx="885.2" cy="217.1" rx="4.8" ry="3.6" transform="rotate(309 885.2 217.1)"/>
 <ellipse cx="890.7" cy="224.0" rx="4.8" ry="3.6" transform="rotate(334 890.7 224.0)"/>
 <ellipse cx="885.1" cy="236.5" rx="4.4" ry="3.2" transform="rotate(17 885.1 236.5)"/>
 <ellipse cx="880.5" cy="243.1" rx="4.4" ry="3.2" transform="rotate(53 880.5 243.1)"/>
 <ellipse cx="872.9" cy="245.7" rx="4.4" ry="3.2" transform="rotate(89 872.9 245.7)"/>
 <ellipse cx="865.2" cy="243.3" rx="4.4" ry="3.2" transform="rotate(125 865.2 243.3)"/>
 <ellipse cx="860.4" cy="236.9" rx="4.4" ry="3.2" transform="rotate(161 860.4 236.9)"/>
 <ellipse cx="860.3" cy="228.9" rx="4.4" ry="3.2" transform="rotate(197 860.3 228.9)"/>
 <ellipse cx="864.9" cy="222.3" rx="4.4" ry="3.2" transform="rotate(233 864.9 222.3)"/>
 <ellipse cx="872.5" cy="219.7" rx="4.4" ry="3.2" transform="rotate(269 872.5 219.7)"/>
 <ellipse cx="880.2" cy="222.1" rx="4.4" ry="3.2" transform="rotate(305 880.2 222.1)"/>
 <ellipse cx="885.0" cy="228.5" rx="4.4" ry="3.2" transform="rotate(341 885.0 228.5)"/>
 <ellipse cx="877.7" cy="236.1" rx="4.0" ry="2.8" transform="rotate(34 877.7 236.1)"/>
 <ellipse cx="871.0" cy="238.5" rx="4.0" ry="2.8" transform="rotate(106 871.0 238.5)"/>
 <ellipse cx="866.7" cy="232.9" rx="4.0" ry="2.8" transform="rotate(178 866.7 232.9)"/>
 <ellipse cx="870.7" cy="227.0" rx="4.0" ry="2.8" transform="rotate(250 870.7 227.0)"/>
 <ellipse cx="877.5" cy="229.0" rx="4.0" ry="2.8" transform="rotate(322 877.5 229.0)"/>
 </g>
 <path d="M866 226 L879 239 M879 226 L866 239 M872.7 222 V243" stroke="#7d9a5a" stroke-width="2"/>
 <circle cx="880" cy="259" r="2.3" fill="#9c7f6c" stroke="#121212" stroke-width="1.3"/>
 <!-- cursor -->
 <path d="M963 408.5 H972 M967.5 404 V413" stroke="#111" stroke-width="1"/>
 <!-- label -->
 <g font-family="Liberation Sans" font-weight="700" font-size="13" text-anchor="middle" stroke="#ffffff" stroke-width="2.6" stroke-linejoin="round" paint-order="stroke" fill="#2a2f38">
  <text x="928.5" y="561">living</text>
  <text x="926" y="575.5">23.69m²</text>
 </g>
</svg>
<!-- floating edit toolbar -->
<div class="a" style="left:842px;top:59px;width:225px;height:90px;overflow:hidden"><div class="a" style="left:38px;top:-10px;width:149px;height:67px;border-radius:7px;background:#f8f9f9;box-shadow:0 0 9px 7px rgba(0,0,0,0.05)"></div></div>
<svg class="a" style="left:899px;top:70px" width="18" height="18" viewBox="0 0 18 18">
 <path d="M1 0 H17 Q18 0 18 1 V4.5 H5 V17 Q5 18 4 18 H1 Q0 18 0 17 V1 Q0 0 1 0 Z" fill="#75777b"/>
 <rect x="6.5" y="1.6" width="2" height="1.6" fill="#f8f9f9"/><rect x="10.5" y="1.6" width="2" height="1.6" fill="#f8f9f9"/><rect x="14.5" y="1.6" width="2" height="1.6" fill="#f8f9f9"/>
 <rect x="1.6" y="6.5" width="1.6" height="2" fill="#f8f9f9"/><rect x="1.6" y="10.5" width="1.6" height="2" fill="#f8f9f9"/><rect x="1.6" y="14.5" width="1.6" height="2" fill="#f8f9f9"/>
 <path d="M14.8 8 L17 10.2 L9.2 18 H7 V15.8 Z" fill="#75777b"/>
</svg>
<div class="tri" style="left:924px;top:85px;border-left-width:3.5px;border-right-width:3.5px;border-top-width:5px;border-top-color:#a5a7aa"></div>
<div class="a" style="left:896px;top:92px;font-size:12.5px;color:#66686c;line-height:14px">Edit</div>
<svg class="a" style="left:965px;top:70px" width="18" height="18" viewBox="0 0 18 18">
 <g fill="#75777b">
  <rect x="0" y="0" width="2.2" height="2.2"/><rect x="4" y="0" width="1.8" height="1.8"/><rect x="8" y="0" width="1.8" height="1.8"/><rect x="12" y="0" width="1.8" height="1.8"/><rect x="15.8" y="0" width="2.2" height="2.2"/>
  <rect x="0" y="4" width="1.8" height="1.8"/><rect x="0" y="8" width="1.8" height="1.8"/><rect x="0" y="12" width="1.8" height="1.8"/><rect x="0" y="15.8" width="2.2" height="2.2"/>
  <rect x="16.2" y="8" width="1.8" height="1.8"/><rect x="16.2" y="12" width="1.8" height="1.8"/><rect x="15.8" y="15.8" width="2.2" height="2.2"/>
  <rect x="4" y="16.2" width="1.8" height="1.8"/><rect x="8" y="16.2" width="1.8" height="1.8"/><rect x="12" y="16.2" width="1.8" height="1.8"/>
  <path d="M12 3.5 L14.5 6 L7 13.5 L4 14 L4.5 11 Z"/>
 </g>
</svg>
<div class="tri" style="left:1006px;top:85px;border-left-width:3.5px;border-right-width:3.5px;border-top-width:5px;border-top-color:#a5a7aa"></div>
<div class="a" style="left:947px;top:92px;font-size:12.5px;color:#66686c;line-height:14px">Split area</div>
<!-- RIGHT PANEL -->
<div class="a" style="left:1650px;top:59px;width:256px;height:840px;background:#e7e8e9"></div>
<div class="a" style="left:1650px;top:59px;width:256px;height:229px;background:#f8f9fa;border-radius:5px 0 0 0;overflow:hidden">
 <svg class="a" style="left:0;top:31px" width="256" height="198" viewBox="1650 90 256 198">
  <defs>
   <linearGradient id="sky" x1="0" y1="0" x2="0" y2="1">
    <stop offset="0" stop-color="#93c4e6"/><stop offset="0.35" stop-color="#a9d3ea"/><stop offset="0.62" stop-color="#d5e6ef"/><stop offset="0.78" stop-color="#eef2f4"/><stop offset="1" stop-color="#f2f3f4"/>
   </linearGradient>
  </defs>
  <rect x="1650" y="90" width="256" height="122" fill="#f8f9f9"/>
  <path d="M1650 90 H1906 V186 Q1790 202 1650 180 Z" fill="#e8eef1"/>
  <path d="M1650 90 H1906 V172 Q1790 188 1650 166 Z" fill="#d7e7f1"/>
  <path d="M1650 90 H1906 V158 Q1790 174 1650 152 Z" fill="#c3e0ef"/>
  <path d="M1650 90 H1906 V144 Q1790 160 1650 138 Z" fill="#afd5eb"/>
  <path d="M1650 90 H1906 V128 Q1790 144 1650 122 Z" fill="#a1cce8"/>
  <path d="M1650 90 H1906 V109 Q1790 125 1650 103 Z" fill="#96c6e6"/>
  <rect x="1650" y="211" width="256" height="79" fill="#e4e6e7"/>
  <g>
  <path d="M1650 212.5 H1906" stroke="#fafbfb" stroke-width="0.8"/>
  <path d="M1650 217.5 H1906" stroke="#fafbfb" stroke-width="0.9"/>
  <path d="M1650 223 H1906" stroke="#fafbfb" stroke-width="1"/>
  <path d="M1650 229.5 H1906" stroke="#fafbfb" stroke-width="1.1"/>
  <path d="M1650 236.5 H1906" stroke="#fafbfb" stroke-width="1.3"/>
  <path d="M1650 244.5 H1906" stroke="#fafbfb" stroke-width="1.5"/>
  <path d="M1650 252 H1906" stroke="#fafbfb" stroke-width="1.7"/>
  <path d="M1650 262 H1906" stroke="#fafbfb" stroke-width="1.9"/>
  <path d="M1650 275 H1906" stroke="#fafbfb" stroke-width="2.1"/>
  <path d="M1650 288 H1906" stroke="#fafbfb" stroke-width="2.2"/>
  <path d="M1585.0 290 L1723.1 211" stroke="#fafbfb" stroke-width="1.8"/>
  <path d="M1621.5 290 L1733.6 211" stroke="#fafbfb" stroke-width="1.8"/>
  <path d="M1658.0 290 L1744.1 211" stroke="#fafbfb" stroke-width="1.8"/>
  <path d="M1694.5 290 L1754.6 211" stroke="#fafbfb" stroke-width="1.8"/>
  <path d="M1731.0 290 L1765.2 211" stroke="#fafbfb" stroke-width="1.8"/>
  <path d="M1767.5 290 L1775.7 211" stroke="#fafbfb" stroke-width="1.8"/>
  <path d="M1804.0 290 L1786.2 211" stroke="#fafbfb" stroke-width="1.8"/>
  <path d="M1840.5 290 L1796.7 211" stroke="#fafbfb" stroke-width="1.8"/>
  <path d="M1877.0 290 L1807.3 211" stroke="#fafbfb" stroke-width="1.8"/>
  <path d="M1913.5 290 L1817.8 211" stroke="#fafbfb" stroke-width="1.8"/>
  <path d="M1950.0 290 L1828.3 211" stroke="#fafbfb" stroke-width="1.8"/>
  </g>
  <!-- room -->
  <rect x="1689.3" y="129" width="217" height="114.5" fill="#dcdcdc" stroke="#1e1e1e" stroke-width="1.5"/>
  <path d="M1699.4 133 H1898.4 L1851.2 157.7 H1740.6 Z" fill="#b2b2b2"/>
  <path d="M1699.4 133 L1740.6 157.7 V211.2 L1699.4 238.5 Z" fill="#c8c3b8"/>
  <path d="M1898.4 133 L1851.2 157.7 V211.2 L1898.4 237.5 Z" fill="#e7dece"/>
  <rect x="1740.6" y="157.7" width="110.6" height="53.5" fill="#e3e3e4"/>
  <path d="M1699.4 238.5 L1740.6 211.2 H1851.2 L1898.4 237.5 Z" fill="#b08651"/>
  <g fill="none" stroke="#1e1e1e" stroke-width="1.4">
   <path d="M1699.4 133 H1898.4 M1699.4 133 L1740.6 157.7 H1851.2 L1898.4 133 M1740.6 157.7 V211.2 H1851.2 V157.7 M1740.6 211.2 L1699.4 238.5 M1851.2 211.2 L1898.4 237.5 M1699.4 133 V238.5 M1898.4 133 V238.5 M1689.3 238.5 H1906"/>
   <path d="M1706 135 L1742 155 M1852 150 L1893 136" stroke-width="1.3"/>
  </g>
  <rect x="1689.3" y="238.5" width="217" height="5" fill="#d8d8d8" stroke="#333" stroke-width="0.8"/>
  <!-- half wall -->
  <path d="M1752 216 L1767 200 V221 L1752 237 Z" fill="#d3d4d6" stroke="#333" stroke-width="0.8"/>
  <path d="M1741 216 H1752 V238.5 H1741 Z" fill="#eeeeee" stroke="#333" stroke-width="0.8"/>
  <path d="M1741 216 H1752 L1767 200 H1758 Z" fill="#6f9550" stroke="#333" stroke-width="0.8"/>
  <!-- window -->
  <path d="M1768.5 193.5 V173 Q1768.5 165.5 1779 165.5 Q1789.5 165.5 1789.5 173 V193.5 Z" fill="#f3f4f5" stroke="#1b1b1b" stroke-width="1.8"/>
  <path d="M1772 174 V190 M1786 174 V190 M1768.5 174 H1789.5 M1768.5 190 H1789.5" stroke="#1b1b1b" stroke-width="1.3"/>
  <!-- pictures -->
  <g stroke="#1b1b1b" stroke-width="1.1">
   <rect x="1805.5" y="165" width="7.5" height="10.2" fill="#9a978c"/>
   <ellipse cx="1820.4" cy="165" rx="3.2" ry="4" fill="#8a7558"/>
   <rect x="1825.5" y="163.4" width="9.8" height="12.8" fill="#a49276"/>
   <rect x="1815.5" y="170.2" width="7" height="7.2" fill="#b0a080"/>
   <rect x="1810.2" y="178.7" width="11.3" height="15.6" fill="#7e6248"/>
   <rect x="1824.5" y="178.7" width="11.3" height="7.6" fill="#a8874e"/>
   <path d="M1802.5 182.5 H1807.6 L1809.5 186.7 L1807.6 191 H1802.5 L1800.6 186.7 Z" fill="#4b3d33"/>
   <rect x="1824.5" y="188" width="8.3" height="4.2" fill="#9a9a8a"/>
  </g>
  <!-- chair -->
  <path d="M1819.6 192.3 H1835.3 V200 H1819.6 Z" fill="#c4b690" stroke="#1b1b1b" stroke-width="1"/>
  <path d="M1808 199 H1834 L1832 209 H1811 Z" fill="#b8a888" stroke="#1b1b1b" stroke-width="1.1"/>
  <path d="M1807.5 198.5 V208 M1811 209 L1810 215.5 M1826 209 L1826.5 216 M1833 203 L1832.5 213" stroke="#1b1b1b" stroke-width="1.1"/>
  <!-- black plant -->
  <path d="M1840 172 Q1846 166 1851 170 L1853.5 176 V192 H1841 Q1838 184 1840 172 Z" fill="#0e0e10"/>
  <!-- console -->
  <path d="M1829 216 L1843 224 H1856 L1850 215 Z" fill="#141414"/>
  <rect x="1839.6" y="191.7" width="32.3" height="4.8" fill="#2c2c2e" stroke="#111" stroke-width="0.8"/>
  <rect x="1841.8" y="196.5" width="29" height="27.5" fill="#e9eaec" stroke="#1b1b1b" stroke-width="1"/>
  <rect x="1845" y="201.8" width="9.4" height="18" fill="#121212"/>
  <path d="M1847 219 Q1847.5 211 1850 207 Q1852 212 1852.5 219 Z" fill="#d8581a"/>
  <path d="M1848.5 219 Q1849 214 1850 211.5 Q1851 215 1851.2 219 Z" fill="#f0a030"/>
  <rect x="1854.5" y="198" width="1.2" height="25" fill="#9a9b9d"/>
  <!-- tv -->
  <path d="M1853.4 166 L1874 157 V185.4 L1853.4 183.8 Z" fill="#8d9476" stroke="#1b1b1b" stroke-width="1.2"/>
  <path d="M1855 170 L1872 163 V175 L1855 178 Z" fill="#b4ae90" opacity="0.7"/>
  <rect x="1858" y="186" width="6" height="5.5" fill="#222"/>
  <path d="M1655 278 L1665 287 M1654 282 L1660 287" stroke="#8a8b8d" stroke-width="0.9"/>
 </svg>
</div>
<svg class="a" style="left:1661px;top:68px" width="6" height="14" viewBox="0 0 6 14"><g fill="#5f6166"><rect x="0" y="0" width="2" height="2"/><rect x="4" y="0" width="2" height="2"/><rect x="0" y="4" width="2" height="2"/><rect x="4" y="4" width="2" height="2"/><rect x="0" y="8" width="2" height="2"/><rect x="4" y="8" width="2" height="2"/><rect x="0" y="12" width="2" height="2"/><rect x="4" y="12" width="2" height="2"/></g></svg>
<div class="a" style="left:1697px;top:67px;font-size:14px;font-weight:700;color:#1f76f2;line-height:16px">3D</div>
<div class="a" style="left:1744px;top:67px;font-size:14px;font-weight:700;color:#55575b;line-height:16px">Floor plan</div>
<div class="a" style="left:1819px;top:67px;font-size:14px;font-weight:700;color:#55575b;line-height:16px">Drawing</div>
<svg class="a" style="left:1891px;top:67px" width="14" height="14" viewBox="0 0 14 14"><rect x="0.7" y="0.7" width="12.6" height="12.6" rx="1.5" fill="none" stroke="#7b7d81" stroke-width="1.3"/><rect x="7" y="3" width="4" height="4" fill="#7b7d81"/></svg>

<div class="a" style="left:1650px;top:297px;width:256px;height:602px;background:#f8f9fa;border-radius:6px 0 0 0"></div>
<svg class="a" style="left:1662px;top:309px" width="6" height="15" viewBox="0 0 6 15"><g fill="#5f6166"><rect x="0" y="0" width="2" height="2"/><rect x="4" y="0" width="2" height="2"/><rect x="0" y="4.3" width="2" height="2"/><rect x="4" y="4.3" width="2" height="2"/><rect x="0" y="8.6" width="2" height="2"/><rect x="4" y="8.6" width="2" height="2"/><rect x="0" y="13" width="2" height="2"/><rect x="4" y="13" width="2" height="2"/></g></svg>
<div class="a" style="left:1672px;top:307px;font-size:16.5px;font-weight:700;color:#55575b;line-height:18px">Draw beam</div>
<svg class="a" style="left:1894px;top:308px" width="12" height="12" viewBox="0 0 12 12"><path d="M1.5 10.5 L10.5 1.5 M6.5 1.3 H10.7 V5.5 M1.3 6.5 V10.7 H5.5" fill="none" stroke="#a3a5a9" stroke-width="1.4"/></svg>

<div class="a" style="left:1663px;top:349px;font-size:14px;font-weight:700;color:#2a2c30;line-height:15px">Inputs</div>
<svg class="a" style="left:1885px;top:350px" width="14" height="9" viewBox="0 0 14 9"><path d="M1 8 L7 2 L13 8" fill="none" stroke="#9a9ca0" stroke-width="1.3"/></svg>
<div class="a" style="left:1663px;top:389px;font-size:14px;color:#3a3c40;line-height:15px">Location line</div><div class="a" style="left:1752px;top:389px;font-size:14px;color:#3a3c40;line-height:15px">Ctrl</div>
<div class="a" style="left:1813px;top:382px;width:88px;height:30px;border:1px solid #e3e4e6;border-radius:2px;background:#f9fafb"></div>
<div class="a" style="left:1823px;top:390px;font-size:14px;color:#3a3c40;line-height:15px">Exter...</div>
<div class="tri" style="left:1881px;top:396px;border-top-color:#a5a7ab"></div>
<div class="a" style="left:1663px;top:426px;font-size:14px;color:#3a3c40;line-height:15px">Ortho</div><div class="a" style="left:1710px;top:426px;font-size:14px;color:#3a3c40;line-height:15px">Shift</div>
<svg class="a" style="left:1837px;top:424px" width="17" height="18" viewBox="0 0 17 18"><rect x="0" y="0" width="17" height="18" rx="2.2" fill="#1f76f2"/><path d="M3.5 9 L7 12.5 L13.5 5.5" fill="none" stroke="#fff" stroke-width="2"/></svg>
<div class="a" style="left:1859px;top:426px;font-size:14px;color:#4a4c50;line-height:15px">Enable</div>
<div class="a" style="left:1650px;top:470px;width:256px;height:1px;background:#e4e5e7"></div>

<div class="a" style="left:1663px;top:486px;font-size:14px;font-weight:700;color:#2a2c30;line-height:15px">Basic</div>
<svg class="a" style="left:1885px;top:487px" width="14" height="9" viewBox="0 0 14 9"><path d="M1 8 L7 2 L13 8" fill="none" stroke="#9a9ca0" stroke-width="1.3"/></svg>

<div class="a" style="left:1663px;top:527px;font-size:14px;color:#3a3c40;line-height:15px">Width</div>
<div class="a" style="left:1813px;top:519px;width:88px;height:31px;border:1px solid #e3e4e6;border-radius:2px;background:#f9fafb"></div>
<div class="a" style="left:1822px;top:527px;font-size:14px;color:#3a3c40;line-height:15px">300</div>
<div class="a" style="left:1866px;top:527px;font-size:14px;color:#a3a5a9;line-height:15px">mm</div>

<div class="a" style="left:1663px;top:569px;font-size:14px;color:#3a3c40;line-height:15px">Height</div>
<div class="a" style="left:1813px;top:561px;width:88px;height:30px;border:1px solid #e3e4e6;border-radius:2px;background:#f9fafb"></div>
<div class="a" style="left:1822px;top:569px;font-size:14px;color:#3a3c40;line-height:15px">600</div>
<div class="a" style="left:1866px;top:569px;font-size:14px;color:#a3a5a9;line-height:15px">mm</div>

<div class="a" style="left:1663px;top:609px;font-size:14px;color:#3a3c40;line-height:15px">Position</div>
<div class="a" style="left:1813px;top:602px;width:88px;height:30px;border:1px solid #e3e4e6;border-radius:2px;background:#f9fafb"></div>
<div class="a" style="left:1822px;top:609px;font-size:14px;color:#3a3c40;line-height:15px">Floor</div>
<div class="tri" style="left:1881px;top:616px;border-top-color:#a5a7ab"></div>

<div class="a" style="left:1663px;top:648px;font-size:14px;color:#3a3c40;line-height:15px">Distance from ...</div>
<svg class="a" style="left:1773px;top:648px" width="9" height="15" viewBox="0 0 9 15"><path d="M1 5.5 L4.5 1.5 L8 5.5 M1 9.5 L4.5 13.5 L8 9.5" fill="none" stroke="#b5b7ba" stroke-width="1.1"/></svg>
<svg class="a" style="left:1786px;top:648px" width="15" height="15" viewBox="0 0 15 15"><circle cx="7.5" cy="7.5" r="7" fill="#c2c4c7"/><circle cx="8.2" cy="3.8" r="1.2" fill="#fff"/><path d="M6 6.5 H8.5 L7.3 11.5 H9" fill="none" stroke="#fff" stroke-width="1.6"/></svg>
<div class="a" style="left:1813px;top:640px;width:88px;height:31px;border:1px solid #e3e4e6;border-radius:2px;background:#f9fafb"></div>
<div class="a" style="left:1822px;top:648px;font-size:14px;color:#3a3c40;line-height:15px">0</div>
<div class="a" style="left:1866px;top:648px;font-size:14px;color:#a3a5a9;line-height:15px">mm</div>
<!-- BOTTOM TOOLBARS -->
<div class="a" style="left:359px;top:864px;width:82px;height:40px;border-radius:6px;background:#f8f9fa;box-shadow:0 0 8px 2px rgba(0,0,0,0.065)"></div>
<div class="a" style="left:450px;top:864px;width:132px;height:40px;border-radius:6px;background:#f8f9fa;box-shadow:0 0 8px 2px rgba(0,0,0,0.065)"></div>
<div class="a" style="left:591px;top:864px;width:101px;height:40px;border-radius:6px;background:#f8f9fa;box-shadow:0 0 8px 2px rgba(0,0,0,0.065)"></div>
<svg class="a" style="left:369px;top:874px" width="20" height="21" viewBox="0 0 20 21">
 <path d="M10 0 L19.5 5 L10 10 L0.5 5 Z" fill="#67696d"/>
 <path d="M0.5 9.5 L3 8.2 L10 12 L17 8.2 L19.5 9.5 L10 14.5 Z" fill="#67696d"/>
 <path d="M0.5 14.5 L3 13.2 L10 17 L17 13.2 L19.5 14.5 L10 19.5 Z" fill="#67696d"/>
</svg>
<div class="a" style="left:399px;top:875px;font-size:15px;font-weight:700;color:#5f6166;line-height:17px">1F</div>
<div class="tri" style="left:423px;top:882px;border-left-width:4px;border-right-width:4px;border-top-width:5px;border-top-color:#b5b7ba"></div>
<div class="a" style="left:459px;top:870px;width:57px;height:27px;border-radius:3px;background:#dde8f6"></div>
<div class="a" style="left:469px;top:875px;font-size:15px;font-weight:700;color:#1f76f2;line-height:17px">2D</div>
<div class="tri" style="left:496px;top:882px;border-left-width:4px;border-right-width:4px;border-top-width:5.5px;border-top-color:#1f76f2"></div>
<div class="a" style="left:526px;top:875px;font-size:15px;font-weight:700;color:#5f6166;line-height:17px">3D</div>
<div class="tri" style="left:553px;top:882px;border-left-width:4.5px;border-right-width:4.5px;border-top-width:5.5px;border-top-color:#5f6166"></div>
<svg class="a" style="left:609px;top:876px" width="20" height="14" viewBox="0 0 20 14">
 <path d="M10 0.5 Q16.5 0.5 19.7 7 Q16.5 13.5 10 13.5 Q3.5 13.5 0.3 7 Q3.5 0.5 10 0.5 Z" fill="#67696d"/>
 <circle cx="10" cy="7" r="3.6" fill="#f8f9fa"/><circle cx="10" cy="7" r="1.9" fill="#67696d"/>
</svg>
<svg class="a" style="left:653px;top:873px" width="21" height="22" viewBox="0 0 21 22">
 <path d="M1 5.5 L5.5 1 H20 V16.5 L15.5 21 H1 Z" fill="none" stroke="#67696d" stroke-width="1.8" stroke-linejoin="round"/>
 <path d="M1 5.5 H15.5 V21 M15.5 5.5 L20 1" fill="none" stroke="#67696d" stroke-width="1.6"/>
 <rect x="4" y="9" width="8.5" height="9" fill="#67696d"/>
 <path d="M7 3.3 H17" stroke="#67696d" stroke-width="1.2"/>
</svg>

<div class="a" style="left:1197px;top:864px;width:57px;height:40px;border-radius:6px;background:#f8f9fa;box-shadow:0 0 8px 2px rgba(0,0,0,0.065)"></div>
<div class="a" style="left:1263px;top:864px;width:57px;height:40px;border-radius:6px;background:#f8f9fa;box-shadow:0 0 8px 2px rgba(0,0,0,0.065)"></div>
<div class="a" style="left:1329px;top:864px;width:303px;height:40px;border-radius:6px;background:#f8f9fa;box-shadow:0 0 8px 2px rgba(0,0,0,0.065)"></div>
<svg class="a" style="left:1216px;top:872px" width="19" height="23" viewBox="0 0 19 23">
 <path d="M4 10 V6.5 Q4 1.2 9.5 1.2 Q15 1.2 15 6.5 V10" fill="none" stroke="#67696d" stroke-width="2.2"/>
 <rect x="0.5" y="9.5" width="18" height="13" rx="2" fill="#67696d"/>
 <rect x="8.5" y="14" width="2" height="4.5" rx="1" fill="#f8f9fa"/>
</svg>
<svg class="a" style="left:1283px;top:875px" width="18" height="18" viewBox="0 0 18 18">
 <rect x="0" y="0" width="18" height="7.5" rx="3.75" fill="#67696d"/><circle cx="3.8" cy="3.75" r="2.2" fill="#f8f9fa"/>
 <rect x="0" y="10" width="18" height="7.5" rx="3.75" fill="#67696d"/><circle cx="13.8" cy="13.75" r="2.2" fill="#f8f9fa"/>
</svg>
<svg class="a" style="left:1345px;top:873px" width="24" height="22" viewBox="0 0 24 22">
 <path d="M1.2 2.4 V15.6 L6 11.6 M1.2 2.4 L6 6.4" fill="none" stroke="#67696d" stroke-width="1.9" stroke-linejoin="miter"/>
 <path d="M6 15.6 V1.3 H21.7 V6" fill="none" stroke="#67696d" stroke-width="1.9"/>
 <path d="M5.5 15.6 H9.7" stroke="#67696d" stroke-width="1.9"/>
 <g fill="#67696d"><circle cx="17" cy="14" r="4.6"/><rect x="15.6" y="7.6" width="2.8" height="3" transform="rotate(0 17 14)"/><rect x="15.6" y="7.6" width="2.8" height="3" transform="rotate(60 17 14)"/><rect x="15.6" y="7.6" width="2.8" height="3" transform="rotate(120 17 14)"/><rect x="15.6" y="7.6" width="2.8" height="3" transform="rotate(180 17 14)"/><rect x="15.6" y="7.6" width="2.8" height="3" transform="rotate(240 17 14)"/><rect x="15.6" y="7.6" width="2.8" height="3" transform="rotate(300 17 14)"/></g>
 <circle cx="17" cy="14" r="1.9" fill="#f8f9fa"/>
</svg>
<svg class="a" style="left:1391px;top:873px" width="21" height="21" viewBox="0 0 21 21">
 <path d="M1 6 V1 H6 M15 1 H20 V6 M20 15 V20 H15 M6 20 H1 V15" fill="none" stroke="#67696d" stroke-width="1.8"/>
 <circle cx="10.5" cy="10.5" r="2.6" fill="#67696d"/>
</svg>
<svg class="a" style="left:1433px;top:871px" width="26" height="26" viewBox="0 0 26 26">
 <path d="M12 19.5 H1 V1 H20 V11" fill="none" stroke="#67696d" stroke-width="1.9"/>
 <circle cx="16.5" cy="17.5" r="5.2" fill="#f8f9fa" stroke="#67696d" stroke-width="1.9"/>
 <path d="M14 17.5 H19 M16.5 15 V20" stroke="#67696d" stroke-width="1.3"/>
 <path d="M20.3 21.3 L24 25" stroke="#67696d" stroke-width="2.2" stroke-linecap="round"/>
</svg>
<div class="a" style="left:1469px;top:873px;width:1px;height:22px;background:#dfe0e2"></div>
<div class="a" style="left:1481px;top:882px;width:17px;height:3px;border-radius:1px;background:#67696d"></div>
<div class="a" style="left:1505px;top:868px;width:88px;height:34px;border:1px solid #dfe1e4;border-radius:3px;background:#f9fafb"></div>
<div class="a" style="left:1518px;top:876px;font-size:15px;color:#3a3c40;line-height:17px">94</div>
<div class="a" style="left:1565px;top:875px;font-size:15px;color:#a3a5a9;line-height:17px">%</div>
<div class="a" style="left:1600px;top:882px;width:17px;height:3px;border-radius:1px;background:#67696d"></div>
<div class="a" style="left:1607px;top:875px;width:3px;height:17px;border-radius:1px;background:#67696d"></div>
</div></body></html>
